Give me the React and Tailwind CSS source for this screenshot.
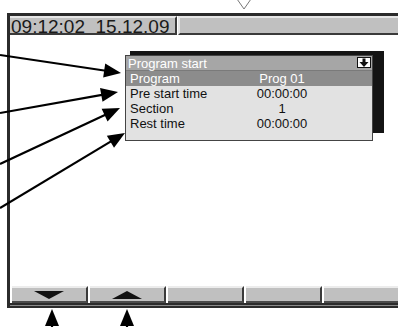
import React from "react";

const font = { fontFamily: '"Liberation Sans", Arial, sans-serif' };

// arrowhead polygon for a line ending at (tx, ty)
const head = (x0, y0, tx, ty, len = 17, half = 7) => {
  const dx = tx - x0;
  const dy = ty - y0;
  const d = Math.hypot(dx, dy);
  const ux = dx / d;
  const uy = dy / d;
  const bx = tx - ux * len;
  const by = ty - uy * len;
  return `${tx},${ty} ${bx - uy * half},${by + ux * half} ${bx + uy * half},${by - ux * half}`;
};

const arrows = [
  [0, 55, 121, 73],
  [0, 113, 118, 92],
  [0, 164, 120, 108],
  [0, 208, 125, 133],
  [52, 330, 52, 309],
  [127, 330, 127, 309],
];

const Row = ({ label, value, active }) => (
  <div
    className={
      "flex h-[15px] items-center pl-[4px] text-[13px] leading-[15px] " +
      (active ? "bg-[#8c8c8c] text-white" : "text-[#111]")
    }
  >
    <span className="w-[122px]">{label}</span>
    <span className="w-[60px] text-center">{value}</span>
  </div>
);

const SoftKey = ({ children }) => (
  <div className="flex h-[17px] w-[76px] shrink-0 items-center justify-center border-t-2 border-r-2 border-b-2 border-t-[#ececec] border-r-[#3a3a3a] border-b-[#4a4a4a] bg-[#c0c0c0]">
    {children}
  </div>
);

export default function App() {
  return (
    <div className="relative h-[327px] w-[398px] overflow-hidden bg-white" style={font}>
      <div className="h-[13px]" />

      {/* device frame */}
      <div className="ml-[7px] flex h-[295px] w-[400px] flex-col border-l-[3px] border-t-[3px] border-b-[2px] border-[#2b2b2b]">
        {/* status bar */}
        <div className="flex h-[19px]">
          <div className="w-[167px] border-t-2 border-r-2 border-b-2 border-t-[#e6e6e6] border-r-[#3a3a3a] border-b-[#3a3a3a] bg-[#c0c0c0] pl-[1px] text-[19px] leading-[17px] text-[#1a1a1a] whitespace-pre">
            09:12:02  15.12.09
          </div>
          <div className="ml-px flex-1 border-t-2 border-l-2 border-b-2 border-t-[#e6e6e6] border-l-[#e6e6e6] border-b-[#3a3a3a] bg-[#c0c0c0]" />
        </div>

        {/* work area */}
        <div className="flex-1 pl-[115px] pt-[20px]">
          <div className="relative h-[86px] w-[248px]">
            <div className="absolute -top-[4px] left-[5px] h-[82px] w-[254px] bg-[#141414]" />
            <div className="relative h-[86px] w-[248px] border border-[#444] bg-[#e2e2e2]">
              <div className="flex h-[15px] items-start justify-between border-b border-[#7a7a7a] bg-[#a6a6a6] pl-[2px] text-[13px] leading-[15px] text-white">
                <span>Program start</span>
                <svg width="14" height="11" viewBox="0 0 14 11" className="mr-px mt-px">
                  <rect x="0.5" y="0.5" width="13" height="10" fill="#fff" stroke="#111" />
                  <rect x="5.5" y="1.5" width="3" height="4" fill="#111" />
                  <polygon points="2.5,5 11.5,5 7,10" fill="#111" />
                </svg>
              </div>
              <Row label="Program" value="Prog 01" active />
              <Row label="Pre start time" value="00:00:00" />
              <Row label="Section" value="1" />
              <Row label="Rest time" value="00:00:00" />
            </div>
          </div>
        </div>

        {/* soft keys */}
        <div className="flex gap-[2px] pl-[2px]">
          <SoftKey>
            <svg width="30" height="8" viewBox="0 0 30 8">
              <polygon points="0,0 30,0 15,8" fill="#111" />
            </svg>
          </SoftKey>
          <SoftKey>
            <svg width="30" height="8" viewBox="0 0 30 8">
              <polygon points="0,8 30,8 15,0" fill="#111" />
            </svg>
          </SoftKey>
          <SoftKey />
          <SoftKey />
          <SoftKey />
        </div>
        <div className="h-[2px] bg-[#2b2b2b]" />
        <div className="h-px bg-[#8a8a8a]" />
      </div>

      {/* annotation arrows */}
      <svg className="pointer-events-none absolute left-0 top-0" width="398" height="327" viewBox="0 0 398 327">
        <polygon points="237,-1 251,-1 244,9" fill="#fff" stroke="#777" strokeWidth="1" />
        {arrows.map(([x0, y0, tx, ty], i) => {
          const d = Math.hypot(tx - x0, ty - y0);
          const ex = tx - ((tx - x0) / d) * 12;
          const ey = ty - ((ty - y0) / d) * 12;
          return (
            <g key={i}>
              <line x1={x0} y1={y0} x2={ex} y2={ey} stroke="#000" strokeWidth="2.2" />
              <polygon points={head(x0, y0, tx, ty)} fill="#000" />
            </g>
          );
        })}
      </svg>
    </div>
  );
}
